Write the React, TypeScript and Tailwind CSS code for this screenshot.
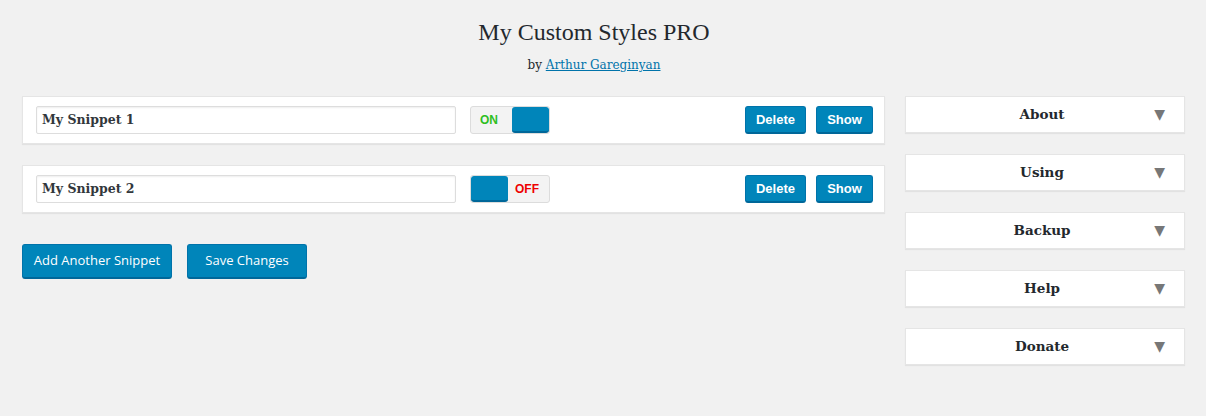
import React from "react"

const serif = { fontFamily: "'DejaVu Serif', Georgia, serif" }

function Toggle({ on }: { on: boolean }) {
    return (
        <div className="flex w-[80px] h-[28px] rounded-[3px] border border-[#dcdcdc] bg-[#f3f3f3] overflow-hidden" style={{ fontFamily: "'Liberation Sans', Arial, sans-serif" }}>
            {on ? (
                <>
                    <div className="flex-1 flex items-center pl-[9px] text-[12px] font-bold text-[#2fbf1f]">ON</div>
                    <div className="w-[37px] h-full bg-[#0085ba] rounded-[3px] border-b-2 border-[#006799]" />
                </>
            ) : (
                <>
                    <div className="w-[37px] h-full bg-[#0085ba] rounded-[3px] border-b-2 border-[#006799]" />
                    <div className="flex-1 flex items-center pl-[7px] text-[12px] font-bold text-[#ee0000]">OFF</div>
                </>
            )}
        </div>
    )
}

function SmallButton({ label, w }: { label: string, w: string }) {
    return (
        <button className={`${w} h-[28px] rounded-[3px] bg-[#0085ba] border border-[#0073aa] border-b-2 border-b-[#006799] text-white text-[13px] font-bold`} style={{ fontFamily: "'Liberation Sans', Arial, sans-serif" }}>
            {label}
        </button>
    )
}

function Snippet({ name, on }: { name: string, on: boolean }) {
    return (
        <div className="flex items-center h-[48px] bg-white border border-[#e5e5e5] shadow-[0_1px_1px_rgba(0,0,0,0.06)] pl-[13px] pr-[11px]">
            <div className="w-[420px] h-[28px] border border-[#dddddd] rounded-[2px] shadow-[inset_0_1px_2px_rgba(0,0,0,0.07)] flex items-center pl-[5px] text-[12.5px] font-bold text-[#32373c]" style={serif}>
                {name}
            </div>
            <div className="ml-[14px]">
                <Toggle on={on} />
            </div>
            <div className="ml-auto flex gap-[10px]">
                <SmallButton label="Delete" w="w-[61px]" />
                <SmallButton label="Show" w="w-[57px]" />
            </div>
        </div>
    )
}

function Panel({ title }: { title: string }) {
    return (
        <div className="h-[37px] bg-white border border-[#e5e5e5] shadow-[0_1px_1px_rgba(0,0,0,0.06)] flex items-center relative">
            <div className="flex-1 text-center text-[13.5px] font-bold text-[#23282d] pr-[6px]" style={serif}>{title}</div>
            <span className="absolute right-[19px] top-[7px] text-[14px] text-[#777]" style={{ fontFamily: "'DejaVu Sans', sans-serif" }}>▼</span>
        </div>
    )
}

export default function App() {
    return (
        <div className="w-[1206px] h-[416px] bg-[#f1f1f1] overflow-hidden">
            <div className="w-[1188px] text-center pt-[17px]">
                <h1 className="text-[24px] text-[#23282d] leading-[30px]" style={{ fontFamily: "'Liberation Serif', Georgia, serif" }}>My Custom Styles PRO</h1>
                <p className="text-[12px] text-[#23282d] mt-[9px]" style={serif}>
                    by <a href="#" className="text-[#0073aa] underline">Arthur Gareginyan</a>
                </p>
            </div>
            <div className="w-[1188px] pl-[22px] pr-[1px]">
                <div className="flex mt-[22px] gap-[20px]">
                    <div className="w-[863px] flex flex-col">
                        <div className="flex flex-col gap-[21px]">
                            <Snippet name="My Snippet 1" on={true} />
                            <Snippet name="My Snippet 2" on={false} />
                        </div>
                        <div className="flex gap-[15px] mt-[31px]" style={{ fontFamily: "'Open Sans', sans-serif" }}>
                            <button className="w-[150px] h-[35px] rounded-[3px] bg-[#0085ba] border border-[#0073aa] border-b-2 border-b-[#006799] text-white text-[13px]">Add Another Snippet</button>
                            <button className="w-[120px] h-[35px] rounded-[3px] bg-[#0085ba] border border-[#0073aa] border-b-2 border-b-[#006799] text-white text-[13px]">Save Changes</button>
                        </div>
                    </div>
                    <div className="w-[280px] flex flex-col gap-[21px]">
                        <Panel title="About" />
                        <Panel title="Using" />
                        <Panel title="Backup" />
                        <Panel title="Help" />
                        <Panel title="Donate" />
                    </div>
                </div>
            </div>
        </div>
    )
}
